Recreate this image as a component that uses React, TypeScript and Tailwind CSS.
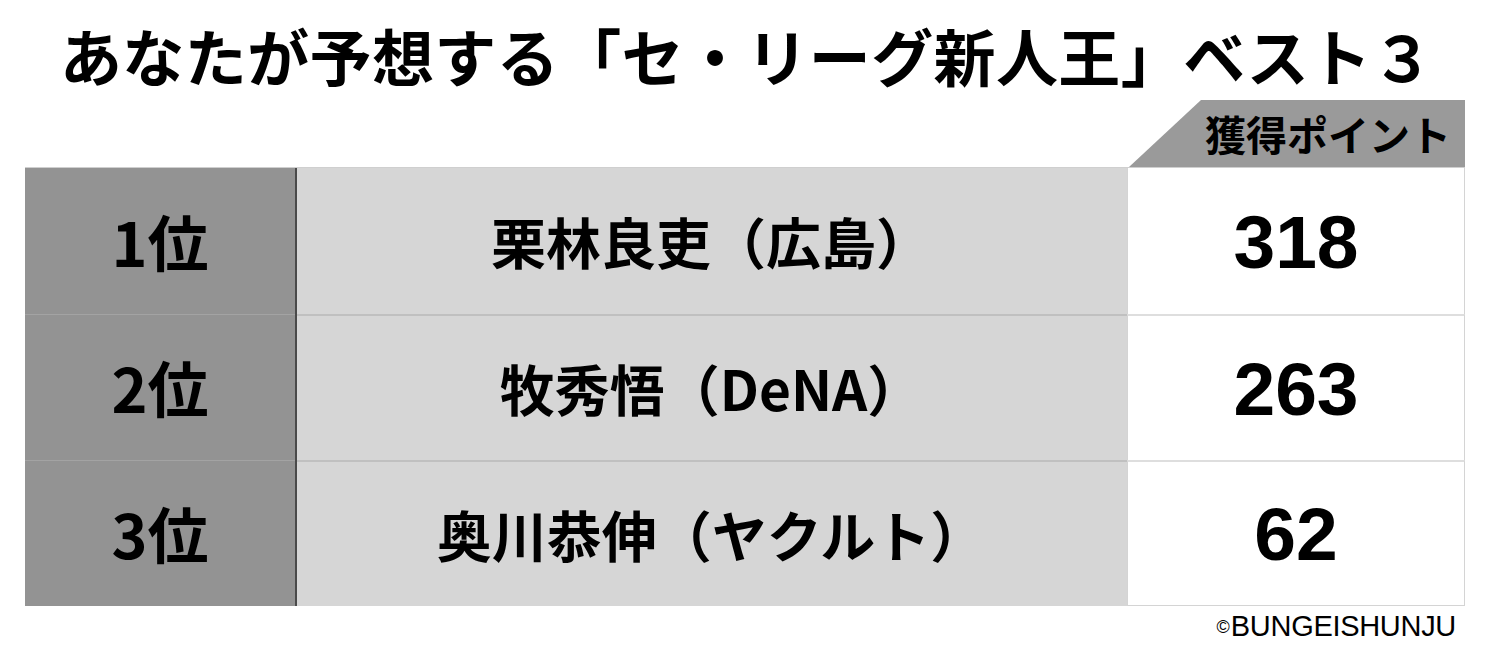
import React from "react";

const rows = [
  { rank: "1位", name: "栗林良吏（広島）", pts: "318" },
  { rank: "2位", name: "牧秀悟（DeNA）", pts: "263" },
  { rank: "3位", name: "奥川恭伸（ヤクルト）", pts: "62" },
];

export default function App() {
  return (
    <div
      className="w-[1500px] h-[662px] bg-white relative overflow-hidden text-black"
      style={{ fontFamily: '"Noto Sans CJK JP", "Noto Sans", sans-serif' }}
    >
      <div className="h-[100px] flex items-center justify-center pt-[10px]">
        <h1 className="text-[62px] font-bold leading-none tracking-[0.4px] ml-[-6px]">
          あなたが予想する「セ・リーグ新人王」ベスト３
        </h1>
      </div>
      <div className="flex h-[67px] justify-end pr-[35px]">
        <div className="relative w-[336px] h-[67px]">
          <svg className="absolute inset-0" width="336" height="67" viewBox="0 0 336 67">
            <polygon points="0,67 72,0 336,0 336,67" fill="#9a9a9a" />
          </svg>
          <div className="relative h-full flex items-center justify-end pr-[14px] text-[41px] font-bold leading-none">
            獲得ポイント
          </div>
        </div>
      </div>
      <div className="ml-[25px] w-[1440px] flex flex-col border-t border-[#cfcfcf]">
        {rows.map((r, i) => (
          <div key={i} className="flex h-[146px]">
            <div
              className={`w-[270px] bg-[#939393] flex items-center justify-center text-[61px] font-bold leading-none ${
                i > 0 ? "border-t border-[#a3a3a3]" : ""
              }`}
            >
              <span className="pb-[2px]">{r.rank}</span>
            </div>
            <div className="w-[2px] bg-[#4a4a4a]" />
            <div
              className={`w-[830px] bg-[#d6d6d6] flex items-center justify-center text-[55px] font-bold leading-none ${
                i > 0 ? "border-t-2 border-[#c0c0c0]" : ""
              }`}
            >
              <span className="pb-[2px] ml-[-2px]">{r.name}</span>
            </div>
            <div
              className={`flex-1 bg-white border-l border-r border-[#d4d4d4] flex items-center justify-center text-[75px] font-bold leading-none ${
                i > 0 ? "border-t-2 border-t-[#dedede]" : ""
              } ${i === 2 ? "border-b" : ""}`}
              style={{ fontFamily: '"Liberation Sans", Arial, sans-serif' }}
            >
              <span className="pt-[2px]">{r.pts}</span>
            </div>
          </div>
        ))}
      </div>
      <div
        className="absolute right-[44px] top-[612px] text-[29px] leading-none flex items-start"
        style={{ fontFamily: '"Liberation Sans", Arial, sans-serif' }}
      >
        <span className="text-[18px] mt-[6px] mr-[1px]">©</span>
        <span className="tracking-[-0.3px]">BUNGEISHUNJU</span>
      </div>
    </div>
  );
}
